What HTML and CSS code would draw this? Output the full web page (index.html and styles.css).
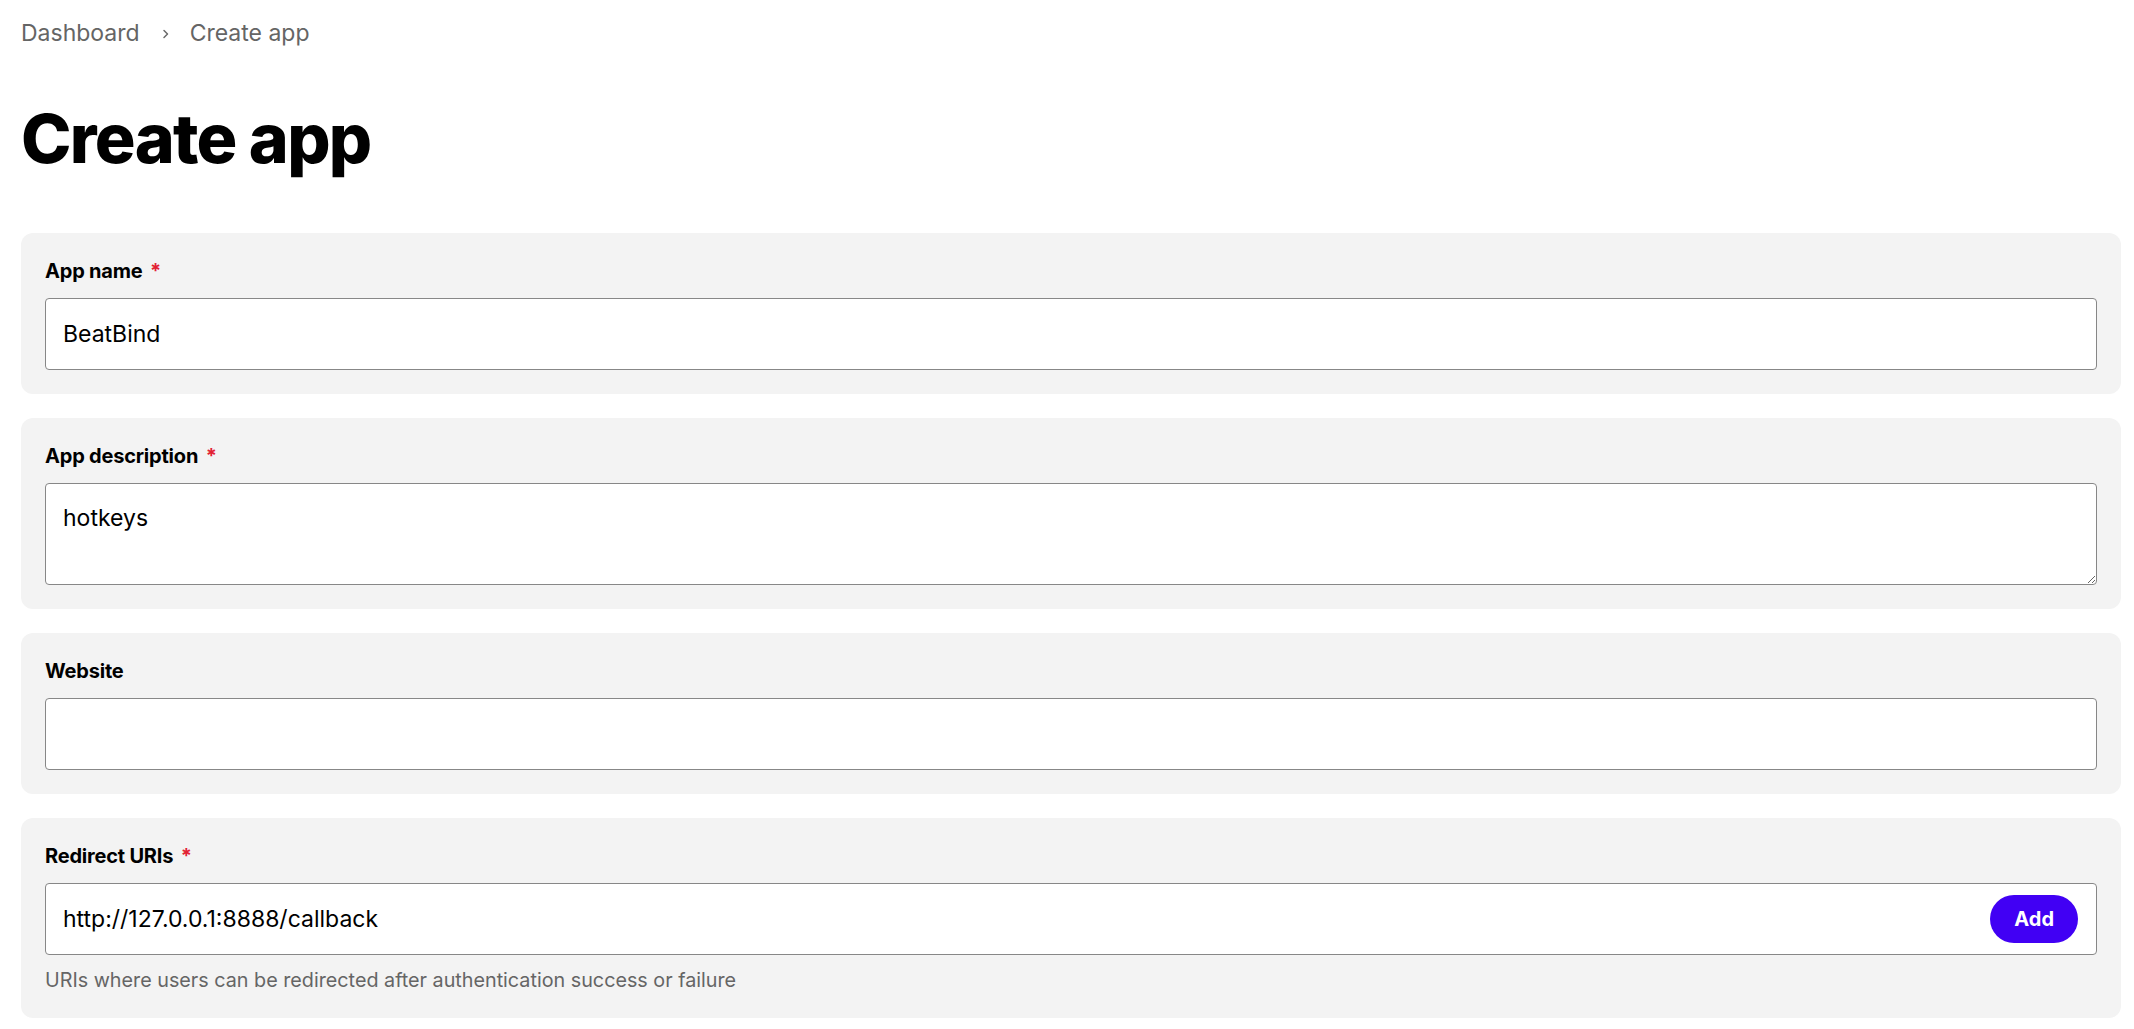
FILE: index.html
```html
<!DOCTYPE html>
<html lang="en">
<head>
<meta charset="utf-8">
<title>Create app</title>
<link rel="stylesheet" href="styles.css">
</head>
<body>
<main class="page">
  <nav class="breadcrumb">
    <a class="crumb" href="#">Dashboard</a>
    <svg class="chevron" width="8" height="12" viewBox="0 0 8 12" aria-hidden="true"><path d="M2 2.5 L5.5 6 L2 9.5" fill="none" stroke="#6a6a6a" stroke-width="1.5" stroke-linecap="round" stroke-linejoin="round"/></svg>
    <span class="crumb">Create app</span>
  </nav>

  <h1 class="title">Create app</h1>

  <form class="form">
    <section class="card">
      <label class="label" for="name">App name <span class="req">*</span></label>
      <input class="field" id="name" type="text" value="BeatBind">
    </section>

    <section class="card">
      <label class="label" for="desc">App description <span class="req">*</span></label>
      <textarea class="field area" id="desc">hotkeys</textarea>
    </section>

    <section class="card">
      <label class="label" for="web">Website</label>
      <input class="field" id="web" type="text" value="">
    </section>

    <section class="card">
      <label class="label" for="uri">Redirect URIs <span class="req">*</span></label>
      <div class="field combo">
        <input class="combo-input" id="uri" type="text" value="http://127.0.0.1:8888/callback">
        <button class="add" type="button">Add</button>
      </div>
      <p class="help">URIs where users can be redirected after authentication success or failure</p>
    </section>
  </form>
</main>
</body>
</html>
```

FILE: styles.css
```css
* {
  box-sizing: border-box;
}

html, body {
  margin: 0;
  padding: 0;
  background: #ffffff;
}

body {
  font-family: Inter, "Liberation Sans", sans-serif;
  color: #000000;
}

.page {
  padding: 17px 13px 0 21px;
}

.breadcrumb {
  display: flex;
  align-items: center;
  height: 32px;
  font-size: 23px;
  line-height: 32px;
  color: #656565;
}

.crumb {
  color: #656565;
  text-decoration: none;
}

.chevron {
  margin: 2px 20px 0 22px;
  flex: none;
}

.title {
  margin: 49px 0 0 0;
  font-size: 68px;
  line-height: 80px;
  font-weight: 800;
  letter-spacing: -0.025em;
}

.form {
  margin-top: 55px;
  display: flex;
  flex-direction: column;
  gap: 24px;
}

.card {
  background: #f3f3f3;
  border-radius: 12px;
  padding: 24px;
}

.label {
  display: block;
  font-size: 20px;
  line-height: 24px;
  font-weight: 700;
  letter-spacing: -0.01em;
  padding-top: 2px;
  margin-bottom: 15px;
}

.req {
  color: #e22134;
  margin-left: 3px;
}

.field {
  display: block;
  width: 100%;
  height: 72px;
  border: 1px solid #878787;
  border-radius: 4px;
  background: #ffffff;
  padding: 0 17px;
  font-family: Inter, "Liberation Sans", sans-serif;
  font-size: 23px;
  color: #000000;
  outline: none;
  margin: 0;
}

.area {
  height: 102px;
  padding: 19px 17px;
  line-height: 30px;
  resize: vertical;
}

.combo {
  display: flex;
  align-items: center;
  padding: 0 18px 0 17px;
}

.combo-input {
  flex: 1;
  min-width: 0;
  border: 0;
  padding: 0;
  margin: 0;
  height: 100%;
  background: transparent;
  font-family: Inter, "Liberation Sans", sans-serif;
  font-size: 23px;
  color: #000000;
  outline: none;
}

.add {
  flex: none;
  height: 48px;
  padding: 0 24px;
  border: 0;
  border-radius: 999px;
  background: #4100f4;
  color: #ffffff;
  font-family: Inter, "Liberation Sans", sans-serif;
  font-size: 20px;
  font-weight: 700;
  cursor: pointer;
}

.help {
  margin: 12px 0 0 0;
  font-size: 19.75px;
  line-height: 27px;
  color: #656565;
}
```
